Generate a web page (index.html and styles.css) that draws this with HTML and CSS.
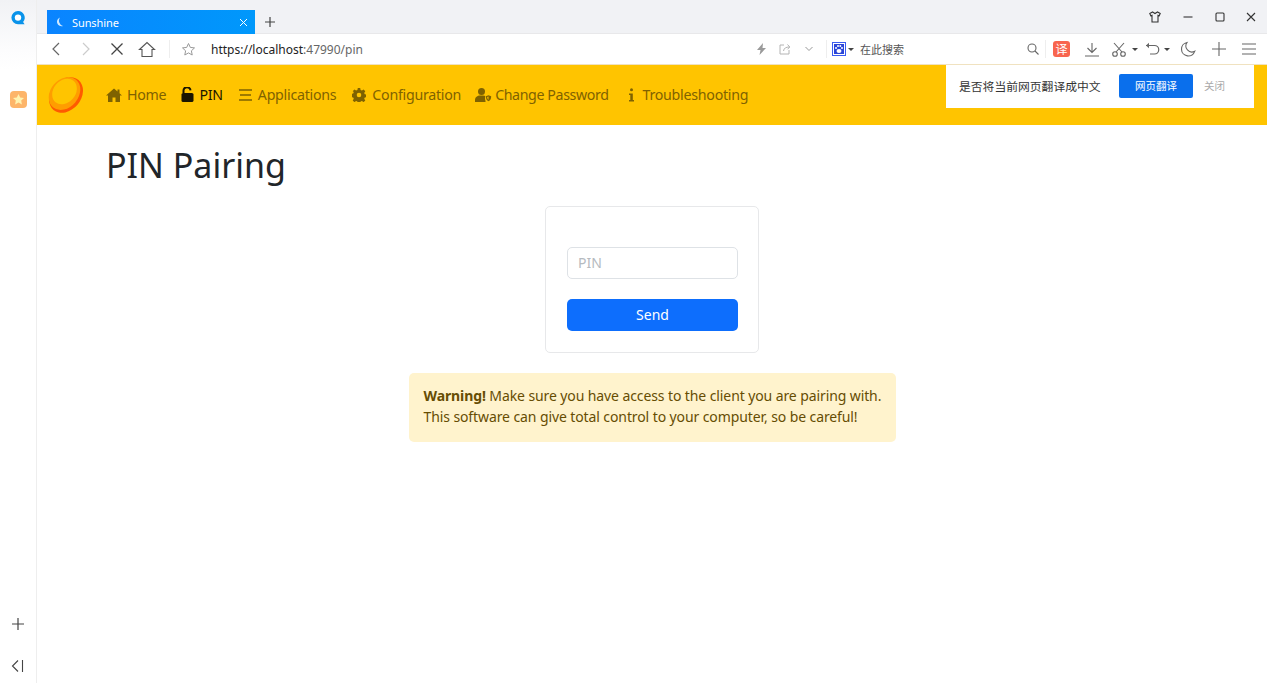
FILE: index.html
```html
<!DOCTYPE html>
<html lang="en">
<head>
<meta charset="utf-8">
<title>Sunshine</title>
<link rel="stylesheet" href="styles.css">
</head>
<body>
<div class="app">
  <aside class="sidebar">
    <svg class="side-logo" width="16" height="16" viewBox="0 0 16 16"><path d="M8 1a6.600 6.600 0 0 0 0 13.200h6.600l-1.500-2.300A6.600 6.600 0 0 0 8 1z" fill="#0a93ea"/><circle cx="8" cy="7.600" r="3.200" fill="#fff"/></svg>
    <svg class="side-fav" width="17" height="17" viewBox="0 0 17 17"><rect width="17" height="17" rx="4" fill="#fdb56a"/><path d="M8.500 3l1.700 3.500 3.800.5-2.800 2.600.7 3.800-3.400-1.900-3.400 1.900.7-3.800L3 7l3.800-.5z" fill="#fff3b0"/></svg>
    <div class="side-spacer"></div>
    <svg class="side-plus" width="14" height="14" viewBox="0 0 14 14"><path d="M7 1v12M1 7h12" stroke="#444" stroke-width="1.200"/></svg>
    <svg class="side-collapse" width="14" height="14" viewBox="0 0 14 14"><path d="M7 1.500 1.500 7 7 12.500M11.500 1v12" fill="none" stroke="#444" stroke-width="1.100"/></svg>
  </aside>
  <div class="main">
    <div class="tabbar">
      <div class="tab">
        <svg class="tab-spin" width="10" height="10" viewBox="0 0 10 10"><path d="M5 .5a4.500 4.500 0 0 0 3 8.500A5.500 5.500 0 0 1 5 .5z" fill="#cfe9ff"/></svg>
        <span class="tab-title">Sunshine</span>
        <svg class="tab-close" width="9" height="9" viewBox="0 0 9 9"><path d="M1 1l7 7M8 1 1 8" stroke="#fff" stroke-width="1"/></svg>
      </div>
      <svg class="tab-new" width="12" height="12" viewBox="0 0 12 12"><path d="M6 1v10M1 6h10" stroke="#444" stroke-width="1.200"/></svg>
      <div class="grow"></div>
      <div class="win-controls">
        <svg class="win-shirt" width="14" height="14" viewBox="0 0 14 14"><path d="M4.500 2 1.800 3.500l1 2.200 1.200-.4V12h6V5.300l1.200.4 1-2.200L9.500 2 7 3.500z" fill="none" stroke="#333" stroke-width="1.100"/></svg>
        <svg width="12" height="12" viewBox="0 0 12 12"><path d="M1.500 6h9" stroke="#333" stroke-width="1.100"/></svg>
        <svg width="12" height="12" viewBox="0 0 12 12"><rect x="2" y="2" width="8" height="8" rx="1" fill="none" stroke="#333" stroke-width="1.100"/></svg>
        <svg width="12" height="12" viewBox="0 0 12 12"><path d="M2 2l8 8M10 2l-8 8" stroke="#333" stroke-width="1.100"/></svg>
      </div>
    </div>
    <div class="addressbar">
      <svg class="ab-back" width="14" height="14" viewBox="0 0 14 14"><path d="M10 1 4 7l6 6" fill="none" stroke="#666" stroke-width="1.200"/></svg>
      <svg class="ab-forward" width="14" height="14" viewBox="0 0 14 14"><path d="m4 1 6 6-6 6" fill="none" stroke="#ccc" stroke-width="1.200"/></svg>
      <svg class="ab-stop" width="14" height="14" viewBox="0 0 14 14"><path d="m1.500 1.500 11 11M12.500 1.500l-11 11" stroke="#444" stroke-width="1.300"/></svg>
      <svg class="ab-home" width="18" height="17" viewBox="0 0 18 17"><path d="M1.500 8.500 9 1.500l7.500 7H14V15.500H4V8.500z" fill="none" stroke="#555" stroke-width="1.100"/></svg>
      <span class="ab-sep"></span>
      <svg class="ab-star" width="15" height="15" viewBox="0 0 15 15"><path d="m7.500 1.500 1.800 3.900 4.200.5-3.100 2.900.8 4.200-3.700-2.100-3.700 2.100.8-4.200L1.500 5.900l4.200-.5z" fill="none" stroke="#999" stroke-width="1"/></svg>
      <div class="url"><span class="url-host">https://localhost</span><span class="url-rest">:47990/pin</span></div>
      <svg class="ab-bolt" width="11" height="12" viewBox="0 0 11 12"><path d="M7 0 1 7h3.500L3.500 12 10 5H6.500z" fill="#9a9a9a"/></svg>
      <svg class="ab-share" width="12" height="12" viewBox="0 0 12 12"><path d="M5 2H1v9h9V7M4.500 8C5 5 7 4 10.500 4M8.500 1.500l2.300 2.500-2.300 2.300" fill="none" stroke="#b4b4b4" stroke-width="1"/></svg>
      <svg class="ab-chev" width="10" height="10" viewBox="0 0 10 10"><path d="m1.500 3 3.500 3.500L8.500 3" fill="none" stroke="#999" stroke-width="1"/></svg>
      <span class="ab-sep ab-sep-search"></span>
      <svg class="ab-paw" width="14" height="14" viewBox="0 0 14 14"><rect width="14" height="14" fill="#3a5bf0"/><rect x="1" y="1" width="12" height="12" fill="#fff"/><rect x="2" y="2" width="10" height="10" fill="#2a45d8"/><ellipse cx="7" cy="9" rx="2.500" ry="2" fill="#fff"/><circle cx="4" cy="6" r="1" fill="#fff"/><circle cx="6" cy="4" r="1" fill="#fff"/><circle cx="8.300" cy="4" r="1" fill="#fff"/><circle cx="10" cy="6" r="1" fill="#fff"/></svg>
      <span class="caret"></span>
      <span class="search-text">在此搜索</span>
      <div class="grow"></div>
      <svg class="ab-search" width="12" height="12" viewBox="0 0 12 12"><circle cx="5" cy="5" r="4" fill="none" stroke="#666" stroke-width="1.100"/><path d="m8 8 3.500 3.500" stroke="#666" stroke-width="1.100"/></svg>
      <span class="ab-sep ab-sep-tools"></span>
      <span class="translate-badge">译</span>
      <svg class="tool-dl" width="16" height="15" viewBox="0 0 16 15"><path d="M8 1v9M3.500 6 8 10.500 12.500 6M1 14h14" fill="none" stroke="#666" stroke-width="1.100"/></svg>
      <svg class="tool-cut" width="14" height="15" viewBox="0 0 14 15"><circle cx="3" cy="12" r="2.300" fill="none" stroke="#666" stroke-width="1.100"/><circle cx="11" cy="12" r="2.300" fill="none" stroke="#666" stroke-width="1.100"/><path d="M4 10 12 1M10 10 2 1" stroke="#666" stroke-width="1.100"/></svg>
      <span class="caret caret-cut"></span>
      <svg class="tool-undo" width="15" height="14" viewBox="0 0 15 14"><path d="M1 3.500h8.500a4 4 0 0 1 0 8.500H5" fill="none" stroke="#666" stroke-width="1.200"/><path d="M4 .8 1 3.500l3 2.700z" fill="#666"/></svg>
      <span class="caret caret-undo"></span>
      <svg class="tool-moon" width="16" height="16" viewBox="0 0 16 16"><path d="M7 1.500a6.800 6.800 0 1 0 7.800 8.700A6 6 0 0 1 7 1.500z" fill="none" stroke="#666" stroke-width="1.100"/></svg>
      <svg class="tool-plus" width="14" height="14" viewBox="0 0 14 14"><path d="M7 0v14M0 7h14" stroke="#666" stroke-width="1.100"/></svg>
      <svg class="tool-menu" width="14" height="12" viewBox="0 0 14 12"><path d="M0 1h14M0 6h14M0 11h14" stroke="#666" stroke-width="1.100"/></svg>
    </div>
    <nav class="navbar">
      <svg class="brand" width="38" height="38" viewBox="0 0 38 38"><ellipse cx="19" cy="19" rx="15" ry="19.500" transform="rotate(40 19 19)" fill="#ff5a00"/><ellipse cx="17.500" cy="17.500" rx="14" ry="18" transform="rotate(40 17.500 17.500)" fill="#ff9d00"/><ellipse cx="17.500" cy="15.500" rx="11" ry="14" transform="rotate(40 17.500 15.500)" fill="#ffc400"/></svg>
      <ul class="nav-list">
        <li class="nav-item nav-home">
          <svg class="nav-icon" width="16" height="14" viewBox="0 0 16 14"><path d="M8 .5 0 7.500h2V14h4.500V9.500h3V14H14V7.500h2l-2.500-2.200V1.500h-2v2z" fill="currentColor"/></svg>
          <span>Home</span>
        </li>
        <li class="nav-item nav-pin is-active">
          <svg class="nav-icon" width="13" height="15" viewBox="0 0 13 15"><path d="M2.500 6V4a3.500 3.500 0 0 1 7-.6" fill="none" stroke="currentColor" stroke-width="2"/><rect x=".5" y="6" width="12" height="9" rx="1.600" fill="currentColor"/></svg>
          <span>PIN</span>
        </li>
        <li class="nav-item nav-apps">
          <svg class="nav-icon" width="13" height="12" viewBox="0 0 13 12"><path d="M0 1h13M1 6h11M0 11h13" stroke="currentColor" stroke-width="1.600"/></svg>
          <span>Applications</span>
        </li>
        <li class="nav-item nav-config">
          <svg class="nav-icon" width="14" height="14" viewBox="0 0 14 14"><path fill-rule="evenodd" d="M5.800 0h2.400l.4 2 1.300.6L11.600 1.500l1.700 1.700-1.100 1.700.6 1.300 2 .4v2.400l-2 .4-.6 1.300 1.100 1.700-1.700 1.700-1.700-1.100-1.300.6-.4 2H5.800l-.4-2-1.300-.6-1.700 1.100-1.700-1.700 1.100-1.700-.6-1.300-2-.4V5.800l2-.4.600-1.300L.7 3.200l1.700-1.700 1.700 1.100 1.300-.6zM7 4.700a2.300 2.300 0 1 0 0 4.600 2.300 2.300 0 0 0 0-4.600z" fill="currentColor"/></svg>
          <span>Configuration</span>
        </li>
        <li class="nav-item nav-password">
          <svg class="nav-icon" width="17" height="14" viewBox="0 0 17 14"><circle cx="6.500" cy="3.500" r="3.500" fill="currentColor"/><path d="M0 14v-2c0-3 2.500-4.500 5-4.500h3c1 0 1.800.2 2.500.6V14z" fill="currentColor"/><circle cx="13.500" cy="10" r="3.500" fill="#ffc400"/><path d="M13.500 7.200l2.700 1c0 2.500-1 4.500-2.700 5-1.700-.5-2.700-2.500-2.700-5z" fill="currentColor"/><path d="M13.500 8.500v3.400c-.8-.5-1.200-1.500-1.300-2.800z" fill="#ffc400"/></svg>
          <span>Change Password</span>
        </li>
        <li class="nav-item nav-trouble">
          <svg class="nav-icon" width="7" height="14" viewBox="0 0 7 14"><circle cx="3.500" cy="1.800" r="1.500" fill="currentColor"/><path d="M1 5.500h3.800V12H6v1.500H1V12h1.300V7H1z" fill="currentColor"/></svg>
          <span>Troubleshooting</span>
        </li>
      </ul>
      <div class="translate-pop">
        <span class="translate-q">是否将当前网页翻译成中文</span>
        <span class="translate-btn">网页翻译</span>
        <span class="translate-close">关闭</span>
      </div>
    </nav>
    <main class="content">
      <h1 class="page-title">PIN Pairing</h1>
      <form class="pin-card">
        <input class="pin-input" type="text" placeholder="PIN">
        <button class="pin-send" type="button">Send</button>
      </form>
      <div class="alert"><b>Warning!</b> Make sure you have access to the client you are pairing with.<br>This software can give total control to your computer, so be careful!</div>
    </main>
  </div>
</div>
</body>
</html>
```
FILE: styles.css
```css
* { box-sizing: border-box; }
html, body { margin: 0; height: 100%; overflow: hidden; }
body {
  font-family: "Noto Sans", "Open Sans", "Noto Sans CJK SC", sans-serif;
  color: #212529;
  background: #fff;
}
svg { flex: none; display: block; }
.app { display: flex; height: 683px; }
.grow { flex: 1; }

.sidebar {
  width: 37px;
  flex: none;
  border-right: 1px solid #eeeeee;
  background: linear-gradient(#f1f2f5 0, #fcfcfd 50px, #fff 70px);
  display: flex;
  flex-direction: column;
  align-items: center;
}
.side-logo { margin-top: 10px; }
.side-fav { margin-top: 65px; margin-left: 1px; }
.side-spacer { flex: 1; }
.side-plus { margin-bottom: 28px; }
.side-collapse { margin-bottom: 10px; }

.main { flex: 1; min-width: 0; display: flex; flex-direction: column; }

.tabbar {
  height: 34px;
  background: #f1f2f5;
  border-bottom: 1px solid #e8e8ea;
  display: flex;
  align-items: flex-end;
  padding-left: 10px;
}
.tab {
  width: 208px;
  height: 24px;
  background: linear-gradient(90deg, #0a84ff, #0098fb);
  display: flex;
  align-items: center;
  padding: 0 7px 0 8px;
  color: #fff;
  margin-bottom: -1px;
}
.tab-title {
  font-size: 11px;
  margin-left: 7px;
  flex: 1;
  letter-spacing: -.1px;
}
.tab-new { margin: 0 0 5px 9px; }
.win-controls {
  display: flex;
  align-items: center;
  gap: 19.500px;
  padding-right: 10px;
  margin-bottom: 9px;
}
.win-shirt { margin-right: 1px; }

.addressbar {
  height: 31px;
  background: #fff;
  border-bottom: 1px solid #f0e2c0;
  display: flex;
  align-items: center;
  padding-left: 12px;
  flex: none;
}
.ab-forward { margin-left: 16px; }
.ab-stop { margin-left: 17px; }
.ab-home { margin-left: 14px; }
.ab-sep { width: 1px; height: 18px; background: #eeeeee; margin-left: 13px; }
.ab-star { margin-left: 11px; }
.url { font-size: 12px; margin-left: 15px; width: 545px; }
.url-host { color: #222; }
.url-rest { color: #666; }
.ab-share { margin-left: 12px; }
.ab-chev { margin-left: 13px; }
.ab-sep-search { margin-left: 12px; }
.ab-paw { margin-left: 5px; }
.caret {
  width: 0;
  height: 0;
  border: 3px solid transparent;
  border-top: 3px solid #444;
  border-bottom: 0;
  margin-left: 2px;
}
.caret-cut { margin-left: 6px; }
.caret-undo { margin-left: 4px; }
.search-text { font-size: 11px; color: #555; margin-left: 6px; font-family: "Noto Sans CJK SC", sans-serif; }
.ab-sep-tools { margin-left: 6px; }
.translate-badge {
  width: 17px;
  height: 16px;
  margin-left: 7px;
  background: #f8654f;
  color: #fff;
  border-radius: 3px;
  font-size: 12px;
  line-height: 16px;
  text-align: center;
  font-family: "Noto Sans CJK SC", sans-serif;
}
.tool-dl { margin-left: 14px; }
.tool-cut { margin-left: 12px; }
.tool-undo { margin-left: 7px; }
.tool-moon { margin-left: 10px; }
.tool-plus { margin-left: 16px; }
.tool-menu { margin-left: 16px; margin-right: 11px; }

.navbar {
  height: 60px;
  flex: none;
  background: #ffc400;
  display: flex;
  align-items: center;
  padding: 0 0 1px 10px;
  position: relative;
}
.brand { margin-right: 21px; }
.nav-list {
  list-style: none;
  display: flex;
  align-items: center;
  margin: 0;
  padding: 0;
  gap: 15px;
}
.nav-item {
  display: flex;
  align-items: center;
  color: #7f6200;
  font-size: 14.200px;
  letter-spacing: -.25px;
  gap: 5px;
}
.nav-item.is-active { color: #1b1500; }
.nav-apps { gap: 6px; margin-left: 1px; }
.nav-config { gap: 6px; margin-left: 1px; }
.nav-password { gap: 3px; margin-left: -1px; letter-spacing: -.38px; }
.nav-trouble { margin-left: 4px; gap: 8px; }

.translate-pop {
  position: absolute;
  left: 909px;
  top: 0;
  width: 308px;
  height: 43px;
  background: #fff;
  display: flex;
  align-items: center;
  padding: 0 0 2px 13px;
  font-family: "Noto Sans CJK SC", sans-serif;
}
.translate-q { font-size: 11.800px; color: #333; width: 160px; white-space: nowrap; }
.translate-btn {
  width: 74px;
  height: 24px;
  background: #0a6fec;
  color: #fff;
  font-size: 10.500px;
  line-height: 24px;
  text-align: center;
  border-radius: 2px;
}
.translate-close { font-size: 10.500px; color: #aaa; margin-left: 11px; }

.content {
  flex: 1;
  display: flex;
  flex-direction: column;
  align-items: center;
  position: relative;
}
.page-title {
  align-self: flex-start;
  margin: 16px 0 0 69px;
  font-size: 34px;
  font-weight: 400;
  line-height: 48px;
  color: #212529;
}
.pin-card {
  width: 214px;
  height: 147px;
  margin-top: 17px;
  border: 1px solid #e7e8ea;
  border-radius: 5px;
  padding: 40px 20px 0 21px;
  display: flex;
  flex-direction: column;
}
.pin-input {
  height: 32px;
  width: 171px;
  border: 1px solid #dee2e6;
  border-radius: 5px;
  padding: 0 10px 2px;
  font: inherit;
  font-size: 14px;
  color: #212529;
  outline: none;
  background: #fff;
}
.pin-input::placeholder { color: #b5bac0; opacity: 1; }
.pin-send {
  height: 32px;
  width: 171px;
  margin-top: 20px;
  padding: 0 0 2px;
  background: #0d6efd;
  border: 0;
  border-radius: 5px;
  color: #fff;
  font: inherit;
  font-size: 14px;
}
.alert {
  width: 487px;
  height: 69px;
  margin-top: 20px;
  background: #fff3cd;
  border-radius: 5px;
  padding: 12px 15px 0;
  color: #664d03;
  font-size: 14px;
  line-height: 21px;
  letter-spacing: -.1px;
  white-space: nowrap;
}
.alert b { font-weight: 700; }
```
